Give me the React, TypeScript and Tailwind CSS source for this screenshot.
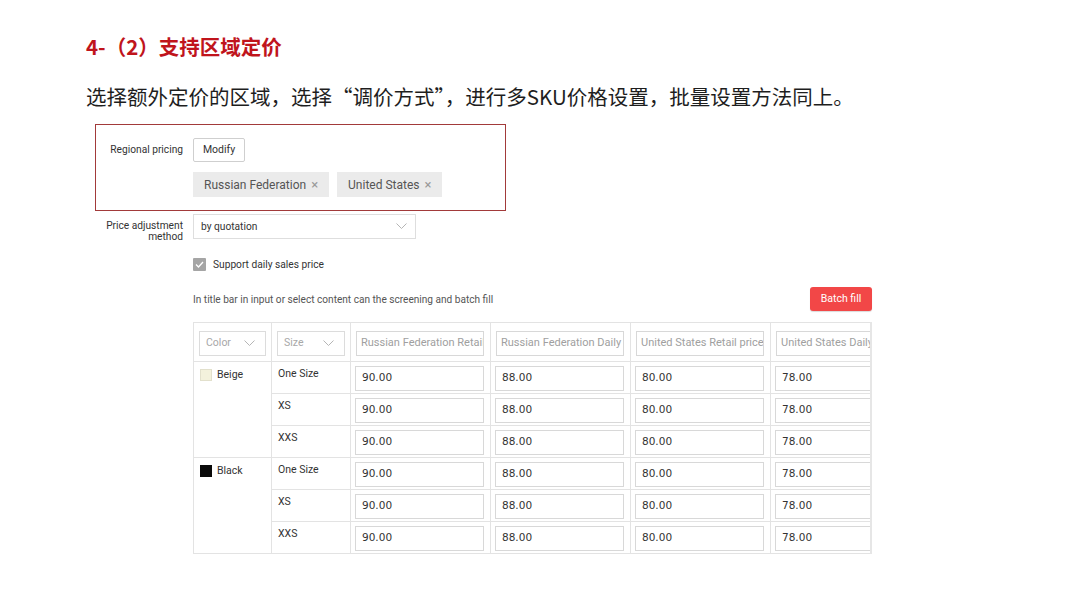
const sizes = ["One Size", "XS", "XXS"];
const groups = [
  { name: "Beige", swatch: "bg-[#f3f1dc] border border-[#e2e0cc]" },
  { name: "Black", swatch: "bg-[#0a0a0a]" },
];
const values = ["90.00", "88.00", "80.00", "78.00"];
const headers = [
  "Russian Federation Retail price (USD)",
  "Russian Federation Daily sales price (USD)",
  "United States Retail price (USD)",
  "United States Daily sales price (USD)",
];

const Chevron = () => (
  <svg width="11" height="7" viewBox="0 0 11 7" className="shrink-0">
    <polyline points="0.5,0.5 5.5,5.5 10.5,0.5" fill="none" stroke="#b5b5b5" strokeWidth="1" />
  </svg>
);

const HeadSelect = ({ label }: { label: string }) => (
  <div className="flex h-[25px] items-center justify-between border border-[#dcdcdc] bg-white pl-[6px] pr-[10px] text-[10.5px] text-[#a8a8a8]">
    <span>{label}</span>
    <Chevron />
  </div>
);

const Field = ({ value, placeholder }: { value?: string; placeholder?: string }) => (
  <div
    className={`flex h-[25px] items-center overflow-hidden whitespace-nowrap border border-[#d8d8d8] bg-white pl-[4px] ${
      placeholder ? "text-[11px] text-[#a0a0a0]" : "pl-[6px] text-[10.5px] text-[#333] font-['DejaVu_Sans',sans-serif]"
    }`}
  >
    {value ?? placeholder}
  </div>
);

export default function App() {
  return (
    <div className="h-[608px] w-[1080px] overflow-hidden bg-white font-['Roboto','Noto_Sans_CJK_SC',sans-serif]">
      <div className="pl-[86px] pt-[34px]">
        <h1 className="text-[20.5px] font-bold leading-[24px] text-[#c0141c] font-['Noto_Sans_CJK_SC',sans-serif]">
          4-（2）支持区域定价
        </h1>
        <p className="mt-[26px] text-[20.5px] leading-[24px] text-[#1e1e1e] font-['Noto_Sans_CJK_SC',sans-serif]">
          选择额外定价的区域，选择“调价方式”，进行多SKU价格设置，批量设置方法同上。
        </p>
      </div>

      <div className="ml-[95px] mt-[16px] text-[10.2px] text-[#333]">
        {/* regional pricing, highlighted */}
        <div className="w-[411px] border border-[#a23a3a] pb-[13px] pt-[13px]">
          <div className="flex gap-[10px]">
            <div className="w-[87px] pt-[5px] text-right leading-[14px]">Regional pricing</div>
            <div className="flex flex-col gap-[10px]">
              <div className="flex h-[24px] w-[52px] items-center justify-center rounded-[2px] border border-[#cfcfcf] bg-white text-[10.5px]">
                Modify
              </div>
              <div className="flex gap-[8px]">
                <div className="flex h-[25px] items-center gap-[5px] bg-[#ebebeb] px-[11px] text-[12px] text-[#555]">
                  Russian Federation <span className="text-[13px] text-[#999]">×</span>
                </div>
                <div className="flex h-[25px] items-center gap-[5px] bg-[#ebebeb] px-[11px] text-[12px] text-[#555]">
                  United States <span className="text-[13px] text-[#999]">×</span>
                </div>
              </div>
            </div>
          </div>
        </div>

        <div className="mt-[3px] flex gap-[10px]">
          <div className="w-[88px] pt-[6px] text-right leading-[11px]">
            Price adjustment
            <br />
            method
          </div>
          <div className="flex h-[25px] w-[223px] items-center justify-between border border-[#dedede] pl-[7px] pr-[8px]">
            <span>by quotation</span>
            <Chevron />
          </div>
        </div>

        <div className="ml-[98px] mt-[15px] flex items-center gap-[7px]">
          <div className="flex h-[13px] w-[13px] items-center justify-center rounded-[1px] bg-[#a5a5a5]">
            <svg width="9" height="7" viewBox="0 0 9 7">
              <polyline points="1,3.5 3.5,6 8,1" fill="none" stroke="#fff" strokeWidth="1.3" />
            </svg>
          </div>
          <span>Support daily sales price</span>
        </div>

        <div className="ml-[98px] mt-[15px] w-[679px]">
          <div className="flex items-center justify-between">
            <span className="text-[10.1px] text-[#555]">
              In title bar in input or select content can the screening and batch fill
            </span>
            <div className="flex h-[24px] w-[62px] items-center justify-center rounded-[3px] bg-[#f24747] text-[10.5px] text-white shadow-[0_1px_1px_rgba(0,0,0,0.15)]">
              Batch fill
            </div>
          </div>

          <div className="mt-[11px] overflow-hidden border-r-2 border-[#e6e6e6]">
            <table className="w-[717px] table-fixed border-collapse text-[10.5px] text-[#333]">
              <colgroup>
                <col className="w-[78px]" />
                <col className="w-[79px]" />
                <col className="w-[140px]" />
                <col className="w-[140px]" />
                <col className="w-[140px]" />
                <col className="w-[140px]" />
              </colgroup>
              <thead>
                <tr className="h-[39px]">
                  <th className="border border-[#e3e3e3] px-[5px] pt-[2px] font-normal">
                    <HeadSelect label="Color" />
                  </th>
                  <th className="border border-[#e3e3e3] px-[5px] pt-[2px] font-normal">
                    <HeadSelect label="Size" />
                  </th>
                  {headers.map((h) => (
                    <th key={h} className="border border-[#e3e3e3] pl-[5px] pr-[6px] pt-[2px] text-left font-normal">
                      <Field placeholder={h} />
                    </th>
                  ))}
                </tr>
              </thead>
              <tbody>
                {groups.map((g) =>
                  sizes.map((s, i) => (
                    <tr key={g.name + s} className="h-[32px]">
                      {i === 0 && (
                        <td rowSpan={3} className="border border-[#e3e3e3] px-[6px] pt-[6px] align-top">
                          <div className="flex items-center gap-[5px] leading-[14px]">
                            <span className={`h-[12px] w-[12px] shrink-0 ${g.swatch}`} />
                            {g.name}
                          </div>
                        </td>
                      )}
                      <td className="border border-[#e3e3e3] pl-[6px] pt-[5px] align-top leading-[14px]">{s}</td>
                      {values.map((v, j) => (
                        <td key={j} className="border border-[#e3e3e3] pb-[2px] pl-[4px] pr-[6px] pt-[3px]">
                          <Field value={v} />
                        </td>
                      ))}
                    </tr>
                  ))
                )}
              </tbody>
            </table>
          </div>
        </div>
      </div>
    </div>
  );
}
